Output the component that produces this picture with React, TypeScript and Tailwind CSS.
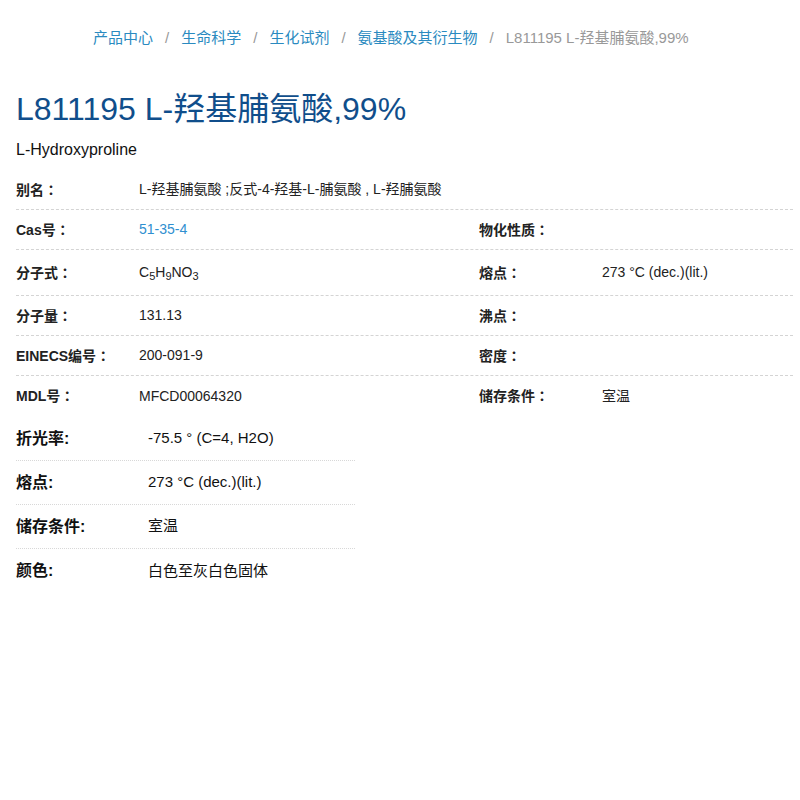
const FONT = { fontFamily: '"Liberation Sans", Arial, "Noto Sans CJK SC", sans-serif' }
const PUNCT = { fontFamily: '"Noto Sans CJK TC", sans-serif' }

const CRUMBS = ["产品中心", "生命科学", "生化试剂", "氨基酸及其衍生物"]

type Cell = { label: string; value?: React.ReactNode }

const SPEC_ROWS: { left: Cell; right?: Cell; h: string }[] = [
  {
    left: { label: "别名", value: "L-羟基脯氨酸 ;反式-4-羟基-L-脯氨酸 , L-羟脯氨酸" },
    h: "h-[40px]",
  },
  {
    left: { label: "Cas号", value: <span className="text-[#2f8fd0]">51-35-4</span> },
    right: { label: "物化性质" },
    h: "h-[40px]",
  },
  {
    left: {
      label: "分子式",
      value: (
        <span>
          C<sub className="text-[11px]">5</sub>H<sub className="text-[11px]">9</sub>NO<sub className="text-[11px]">3</sub>
        </span>
      ),
    },
    right: { label: "熔点", value: "273 °C (dec.)(lit.)" },
    h: "h-[46px]",
  },
  { left: { label: "分子量", value: "131.13" }, right: { label: "沸点" }, h: "h-[40px]" },
  { left: { label: "EINECS编号", value: "200-091-9" }, right: { label: "密度" }, h: "h-[40px]" },
  { left: { label: "MDL号", value: "MFCD00064320" }, right: { label: "储存条件", value: "室温" }, h: "h-[40px]" },
]

const EXTRA_ROWS = [
  { label: "折光率:", value: "-75.5 ° (C=4, H2O)" },
  { label: "熔点:", value: "273 °C (dec.)(lit.)" },
  { label: "储存条件:", value: "室温" },
  { label: "颜色:", value: "白色至灰白色固体" },
]

function Label({ text }: { text: string }) {
  return (
    <span className="font-bold">
      {text}
      <span style={PUNCT}>：</span>
    </span>
  )
}

export default function App() {
  return (
    <div className="min-h-[800px] bg-white text-[#222]" style={FONT}>
      {/* Breadcrumb */}
      <nav className="flex items-center pl-[93px] pt-[29px] text-[15px] leading-[18px]">
        {CRUMBS.map((c) => (
          <span key={c} className="flex items-center">
            <a href="#" className="text-[#2a8ac0]">{c}</a>
            <span className="px-[12px] text-[#999]">/</span>
          </span>
        ))}
        <span className="text-[#999]">L811195 L-羟基脯氨酸,99%</span>
      </nav>

      <div className="px-4">
        <h1 className="mt-[43px] text-[32px] leading-[38px] text-[#104e8b]">L811195 L-羟基脯氨酸,99%</h1>
        <p className="mt-[12px] text-[16px] leading-[20px] text-[#111]">L-Hydroxyproline</p>

        {/* Spec table */}
        <div className="mt-[10px] w-[777px] text-[14px] text-[#222]">
          {SPEC_ROWS.map((r, i) => (
            <div
              key={i}
              className={`grid grid-cols-[123px_340px_123px_1fr] items-center ${r.h} ${
                i < SPEC_ROWS.length - 1 ? "border-b border-dashed border-[#d4d4d4]" : ""
              }`}
            >
              <Label text={r.left.label} />
              <span className={r.left.label === "别名" ? "col-span-3" : ""}>{r.left.value}</span>
              {r.right && (
                <>
                  <Label text={r.right.label} />
                  <span>{r.right.value}</span>
                </>
              )}
            </div>
          ))}
        </div>

        {/* Extra properties */}
        <div className="mt-[1px] w-[339px] text-[15px] text-[#111]">
          {EXTRA_ROWS.map((r, i) => (
            <div
              key={r.label}
              className={`grid grid-cols-[132px_1fr] items-center h-[44px] ${
                i < EXTRA_ROWS.length - 1 ? "border-b border-dotted border-[#d8d8d8]" : ""
              }`}
            >
              <span className="font-bold text-[16px]">{r.label}</span>
              <span>{r.value}</span>
            </div>
          ))}
        </div>
      </div>
    </div>
  )
}
